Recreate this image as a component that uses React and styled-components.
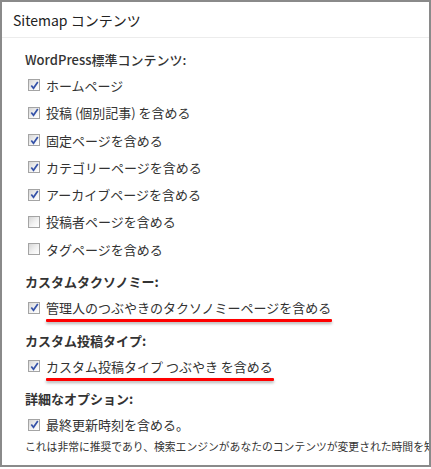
import styled, { createGlobalStyle } from "styled-components"

const Global = createGlobalStyle`
  html, body {
    margin: 0;
    padding: 0;
    background: #fff;
  }
  body {
    font-family: "Noto Sans CJK JP", "Noto Sans", "Liberation Sans", sans-serif;
    color: #333;
  }
`

const Panel = styled.div`
  width: 431px;
  height: 467px;
  box-sizing: border-box;
  border: 2px solid #8a8a8a;
  overflow: hidden;
  background: #fff;
`

const Header = styled.div`
  height: 36px;
  box-sizing: border-box;
  border-bottom: 1px solid #ececec;
  display: flex;
  align-items: center;
  padding-left: 11px;
  font-size: 14px;
  color: #222;
`

const Body = styled.div`
  padding: 9px 0 0 23px;
`

const Section = styled.div`
  & + & {
    margin-top: 6.5px;
  }
`

const Heading = styled.div`
  height: 24.7px;
  display: flex;
  align-items: center;
  font-size: 13px;
  font-weight: ${(p) => (p.$light ? 500 : 700)};
  color: #333;
`

const Row = styled.label`
  height: 27.33px;
  display: flex;
  align-items: center;
  gap: 6px;
  padding-left: 3px;
  font-size: 13px;
  color: #333;
  white-space: nowrap;
`

const Box = styled.span`
  width: 12px;
  height: 12px;
  box-sizing: border-box;
  border: 1px solid #a4a4a4;
  background: linear-gradient(135deg, #d6d6d6 0%, #f2f2f2 55%, #fff 100%);
  display: flex;
  align-items: center;
  justify-content: center;
  flex: none;
`

const Marked = styled.span`
  position: relative;
  &::after {
    content: "";
    position: absolute;
    left: 0;
    right: -1px;
    bottom: -5px;
    height: 3px;
    border-radius: 1px;
    background: #f00;
    box-shadow: 0 2px 3px rgba(0, 0, 0, 0.3);
  }
`

const Note = styled.div`
  font-size: 10.8px;
  line-height: 15px;
  color: #333;
  white-space: nowrap;
`

const Check = ({ on }) => (
  <Box>
    {on && (
      <svg width="9" height="9" viewBox="0 0 9 9">
        <path d="M1.3 4.4 L3.5 7.3 L7.8 1" fill="none" stroke="#3552a8" strokeWidth="1.7" />
      </svg>
    )}
  </Box>
)

const Item = ({ on, mark, children }) => (
  <Row>
    <Check on={on} />
    {mark ? <Marked>{children}</Marked> : <span>{children}</span>}
  </Row>
)

const App = () => {
  return (
    <Panel>
      <Global />
      <Header>Sitemap コンテンツ</Header>
      <Body>
        <Section>
          <Heading $light>WordPress標準コンテンツ:</Heading>
          <Item on>ホームページ</Item>
          <Item on>投稿 (個別記事) を含める</Item>
          <Item on>固定ページを含める</Item>
          <Item on>カテゴリーページを含める</Item>
          <Item on>アーカイブページを含める</Item>
          <Item>投稿者ページを含める</Item>
          <Item>タグページを含める</Item>
        </Section>
        <Section>
          <Heading>カスタムタクソノミー:</Heading>
          <Item on mark>管理人のつぶやきのタクソノミーページを含める</Item>
        </Section>
        <Section>
          <Heading>カスタム投稿タイプ:</Heading>
          <Item on mark>カスタム投稿タイプ つぶやき を含める</Item>
        </Section>
        <Section>
          <Heading>詳細なオプション:</Heading>
          <Item on>最終更新時刻を含める。</Item>
          <Note>これは非常に推奨であり、検索エンジンがあなたのコンテンツが変更された時間を知ることができます。</Note>
        </Section>
      </Body>
    </Panel>
  )
}

export default App
